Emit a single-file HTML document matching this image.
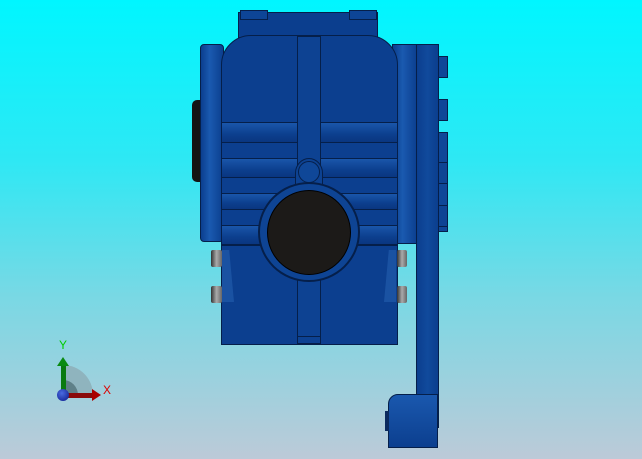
<!DOCTYPE html><html><head><style>
body{margin:0;width:642px;height:459px;overflow:hidden;background:linear-gradient(#00f6ff 0%,#2ee8f4 35%,#7ad8e4 65%,#bccad8 100%);position:relative;font-family:"Liberation Sans",sans-serif}
div{position:absolute;box-sizing:border-box}
.b{background:#0b3e8e;border:1px solid #051f4a}
.l{background:linear-gradient(90deg,#0b3e8e,#1a5ab0 40%,#0b3e8e)}
.rib{background:linear-gradient(#1a56aa,#0c3f8e 60%,#0a3680);border-top:1px solid #051f4a;border-bottom:1px solid #051f4a}
.pin{background:linear-gradient(90deg,#333,#aaa 50%,#666);border-radius:2px}
</style></head><body>
<!-- left disc -->
<div style="left:192px;top:100px;width:12px;height:82px;background:#141414;border-radius:5px 0 0 5px"></div>
<!-- left flange -->
<div class="b l" style="left:200px;top:44px;width:24px;height:198px;border-radius:4px"></div>
<!-- right section -->
<div class="b l" style="left:392px;top:44px;width:26px;height:200px"></div>
<!-- top cap -->
<div class="b" style="left:238px;top:12px;width:140px;height:26px"></div>
<div class="b" style="left:240px;top:10px;width:28px;height:10px;background:#0d4596"></div>
<div class="b" style="left:349px;top:10px;width:28px;height:10px;background:#0d4596"></div>
<!-- main body -->
<div class="b" style="left:221px;top:35px;width:177px;height:215px;border-radius:30px 30px 0 0;background:#0c3f8f"></div>
<!-- ribs -->
<div class="rib" style="left:222px;top:122px;width:175px;height:21px"></div>
<div class="rib" style="left:222px;top:158px;width:175px;height:20px"></div>
<div class="rib" style="left:222px;top:193px;width:175px;height:17px"></div>
<div class="rib" style="left:222px;top:225px;width:175px;height:20px"></div>
<!-- lower body -->
<div class="b" style="left:221px;top:245px;width:177px;height:100px;background:#0c3f8f"></div>
<div style="left:222px;top:250px;width:12px;height:52px;background:#1a52a2;clip-path:polygon(0 0,60% 0,100% 100%,0 100%)"></div>
<div style="left:384px;top:250px;width:12px;height:52px;background:#1a52a2;clip-path:polygon(40% 0,100% 0,100% 100%,0 100%)"></div>
<!-- vertical rib -->
<div class="b" style="left:297px;top:36px;width:24px;height:308px;background:#0d4292"></div>
<div style="left:297px;top:336px;width:24px;height:1px;background:#051f4a"></div>
<!-- nut -->
<div class="b" style="left:295px;top:158px;width:28px;height:30px;border-radius:50% 50% 0 0;background:#0d4292"></div>
<div class="b" style="left:298px;top:161px;width:22px;height:22px;border-radius:50%;background:#0f4798"></div>
<!-- hole -->
<div class="b" style="left:258px;top:182px;width:102px;height:100px;border-radius:50%;background:#0e4494;border:2px solid #051f4a"></div>
<div style="left:267px;top:190px;width:84px;height:85px;border-radius:50%;background:#1c1a18;border:1px solid #000"></div>
<!-- pins -->
<div class="pin" style="left:211px;top:250px;width:11px;height:17px"></div>
<div class="pin" style="left:211px;top:286px;width:11px;height:17px"></div>
<div class="pin" style="left:397px;top:250px;width:10px;height:17px"></div>
<div class="pin" style="left:397px;top:286px;width:10px;height:17px"></div>
<!-- right bolts -->
<div class="b" style="left:438px;top:56px;width:10px;height:22px;background:#0f4798"></div>
<div class="b" style="left:438px;top:99px;width:10px;height:22px;background:#0f4798"></div>
<div class="b" style="left:438px;top:132px;width:10px;height:100px;background:#0f4798"></div>
<div class="b" style="left:438px;top:162px;width:10px;height:22px;background:#0e4494"></div>
<div class="b" style="left:438px;top:205px;width:10px;height:22px;background:#0e4494"></div>
<!-- arm -->
<div class="b" style="left:416px;top:44px;width:23px;height:384px;background:linear-gradient(90deg,#0b3e8e,#104a9c 50%,#0b3e8e)"></div>
<!-- lever -->
<div class="b" style="left:388px;top:394px;width:50px;height:54px;border-radius:10px 0 0 0;background:linear-gradient(#1a58ae,#0c3f8f)"></div>
<div style="left:385px;top:411px;width:4px;height:20px;background:#0b2a5e"></div>
<!-- triad -->
<div style="left:63px;top:365px;width:30px;height:30px;background:#8fb4be;border-radius:0 30px 0 0"></div>
<div style="left:63px;top:380px;width:15px;height:15px;background:#5f8088;border-radius:0 15px 0 0"></div>
<div style="left:61px;top:365px;width:5px;height:30px;background:#0a7a10"></div>
<div style="left:57px;top:357px;width:0;height:0;border-left:6px solid transparent;border-right:6px solid transparent;border-bottom:9px solid #0a8a12"></div>
<div style="left:63px;top:393px;width:30px;height:5px;background:#8a0a0a"></div>
<div style="left:92px;top:389px;width:0;height:0;border-top:6px solid transparent;border-bottom:6px solid transparent;border-left:9px solid #a00"></div>
<div style="left:57px;top:389px;width:12px;height:12px;border-radius:50%;background:radial-gradient(circle at 40% 35%,#4a6ae0,#0a1a8a)"></div>
<div style="left:59px;top:338px;color:#0c0;font-size:12px">Y</div>
<div style="left:103px;top:383px;color:#d00;font-size:12px">X</div>
</body></html>
